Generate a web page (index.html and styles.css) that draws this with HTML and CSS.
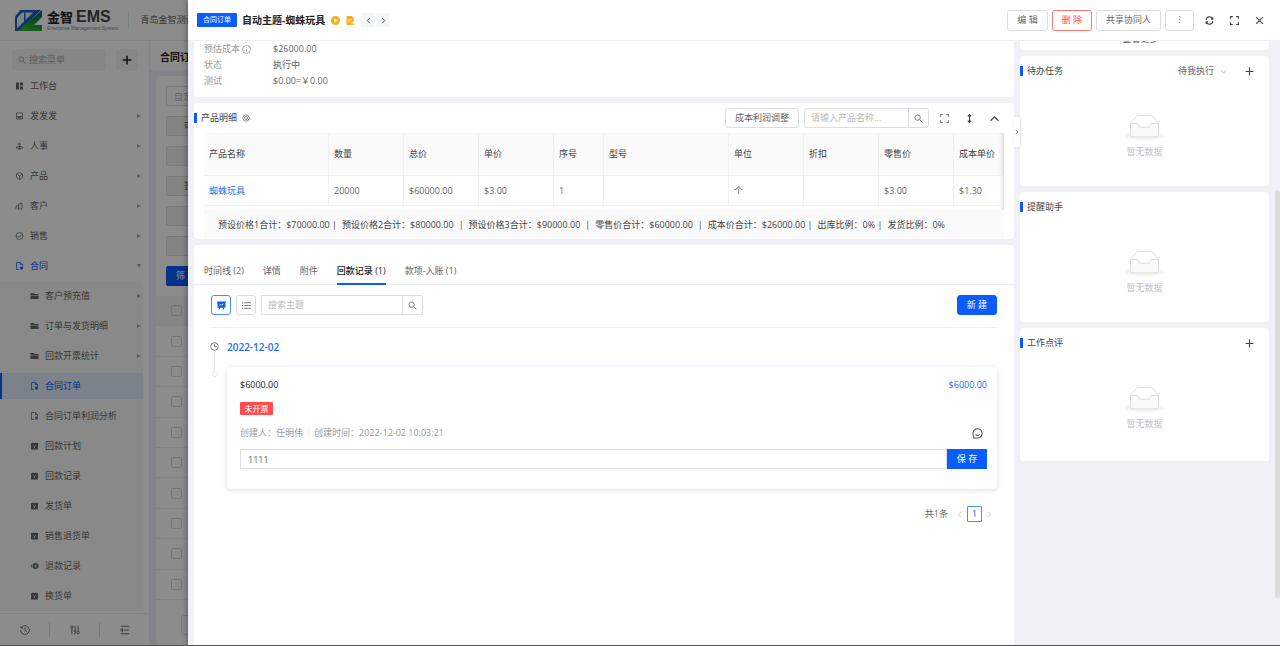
FILE: index.html
```html
<!DOCTYPE html>
<html lang="zh-CN">
<head>
  <meta charset="UTF-8">
  <meta name="viewport" content="width=device-width, initial-scale=1.0">
  <title>合同订单</title>
  <link rel="stylesheet" href="styles.css">
</head>
<body>
  <!-- icon set -->
  <svg class="sprite" aria-hidden="true">
    <linearGradient id="logo-fade" x1="1" y1="0" x2="0.6" y2="1">
      <stop offset="0" stop-color="#1450b8"/><stop offset="0.45" stop-color="#16803c"/><stop offset="1" stop-color="#2cb52c"/>
    </linearGradient>
    <symbol id="i-search" viewBox="0 0 16 16"><circle cx="6.5" cy="6.5" r="4.8"/><path d="M10.2 10.2L15 15"/></symbol>
    <symbol id="i-plus" viewBox="0 0 16 16"><path d="M8 1v14M1 8h14"/></symbol>
    <symbol id="i-close" viewBox="0 0 16 16"><path d="M2 2l12 12M14 2L2 14"/></symbol>
    <symbol id="i-left" viewBox="0 0 16 16"><path d="M11 2L5 8l6 6"/></symbol>
    <symbol id="i-right" viewBox="0 0 16 16"><path d="M5 2l6 6-6 6"/></symbol>
    <symbol id="i-up" viewBox="0 0 16 16"><path d="M1 12l7-7 7 7"/></symbol>
    <symbol id="i-down" viewBox="0 0 16 16"><path d="M2 4l6 8 6-8"/></symbol>
    <symbol id="i-full" viewBox="0 0 16 16"><path d="M1 5V1h4M11 1h4v4M15 11v4h-4M5 15H1v-4"/></symbol>
    <symbol id="i-reload" viewBox="0 0 16 16"><path d="M2 7a6 6 0 0 1 11.500-2M14 9a6 6 0 0 1-11.500 2M14 2v3.500h-3.500M2 14v-3.500h3.500"/></symbol>
    <symbol id="i-updown" viewBox="0 0 16 16"><path d="M8 1v14M5 4l3-3 3 3M5 12l3 3 3-3"/></symbol>
    <symbol id="i-info" viewBox="0 0 16 16"><circle cx="8" cy="8" r="7"/><path d="M8 7v5M8 4v1.500"/></symbol>
    <symbol id="i-gear" viewBox="0 0 16 16"><path d="M5 2h6l4 6-4 6H5L1 8z"/><circle cx="8" cy="8" r="3"/></symbol>
    <symbol id="i-list" viewBox="0 0 16 16"><path d="M4 3h12M4 8h12M4 13h12M0 3h2M0 8h2M0 13h2"/></symbol>
    <symbol id="i-clock" viewBox="0 0 16 16"><circle cx="8" cy="8" r="6.800"/><path d="M8 4v4.500h4"/></symbol>
    <symbol id="i-history" viewBox="0 0 16 16"><path d="M2 4.500A7 7 0 1 1 1 8M1 2l1 3h3M8 4v4.500l3 2"/></symbol>
    <symbol id="i-tune" viewBox="0 0 16 16"><path d="M3 6v9M8 1v6M8 10v5M13 1v8"/><circle cx="3" cy="3.500" r="2"/><circle cx="8" cy="9" r="1.500"/><circle cx="13" cy="12" r="2"/></symbol>
    <symbol id="i-fold" viewBox="0 0 16 16"><path d="M1 2h14M6 8h9M1 14h14M4 5.500L1 8l3 2.500z"/></symbol>
    <symbol id="i-smile" viewBox="0 0 16 16"><path d="M2 14.500l.5-3A6.700 6.700 0 1 1 8 14.500zM5 9.500c1.500 2 4.500 2 6 0"/></symbol>
    <symbol id="i-board" viewBox="0 0 16 16"><path class="solid" d="M0 1h16v2h-1v9h-3l1 3h-2l-1-3H6l-1 3H3l1-3H1V3H0z"/><path class="cut" d="M4.500 8L7 6l1.500 1.500L11.500 5"/></symbol>
    <symbol id="i-dash" viewBox="0 0 16 16"><path class="solid" d="M1 1h6v14H1zM9 1h6v6H9zM9 9h6v6H9z"/></symbol>
    <symbol id="i-inbox" viewBox="0 0 16 16"><path d="M2 2h12v12H2zM2 9h12M5 14v-3h6v3"/></symbol>
    <symbol id="i-org" viewBox="0 0 16 16"><circle cx="8" cy="4" r="2"/><path d="M8 6v8M1 12c1-3 4-3 7-3s6 0 7 3H1zM5 14h6"/></symbol>
    <symbol id="i-box" viewBox="0 0 16 16"><path d="M8 1l6 3v7l-6 4-6-4V4zM2 4l6 4 6-4M8 8v7"/></symbol>
    <symbol id="i-building" viewBox="0 0 16 16"><path d="M1 14V8h5v6M6 14V4l7-2v12zM9 7h1M9 10h1"/></symbol>
    <symbol id="i-badge" viewBox="0 0 16 16"><circle cx="8" cy="8" r="7"/><path d="M4 8l3 2 5-4"/></symbol>
    <symbol id="i-doc" viewBox="0 0 16 16"><path d="M7 15H2V1h8l4 4v4M10 1v4h4"/><circle class="solid" cx="12" cy="12" r="3"/></symbol>
    <symbol id="i-folder" viewBox="0 0 16 16"><path class="solid" d="M0 2h6l2 2h8v2H0zM0 7h16v7H0z"/></symbol>
    <symbol id="i-pack" viewBox="0 0 16 16"><path class="solid" d="M1 2h3V1h2v1h4V1h2v1h3v13H1z"/><path class="cut" d="M5.500 7L8 9l2.500-2M8 9v3"/></symbol>
    <symbol id="i-refund" viewBox="0 0 16 16"><circle class="solid" cx="10" cy="8" r="6"/><path d="M2 5v6"/><path class="cut" d="M9 6h2v4H9z"/></symbol>
    <symbol id="i-empty" viewBox="0 0 64 41">
      <ellipse cx="32" cy="34" rx="32" ry="7" fill="#f5f5f5" stroke="none"/>
      <path d="M55 13.760L44.854 2.258C44.367 1.474 43.656 1 42.907 1H21.093c-.749 0-1.460.474-1.947 1.257L9 13.761V23h46z" fill="#fff"/>
      <path d="M41.613 16.931c0-1.605.994-2.930 2.227-2.931H55v18.137C55 34.260 53.680 36 52.050 36h-40.100C10.320 36 9 34.259 9 32.137V14h11.160c1.233 0 2.227 1.323 2.227 2.928 0 1.605 1.005 2.923 2.237 2.923h14.752c1.232 0 2.237-1.315 2.237-2.920z" fill="#fafafa"/>
    </symbol>
  </svg>

  <div class="app">
    <header class="topbar">
      <svg class="logo" viewBox="0 0 54 42">
        <path d="M0 13L11 0h41L8 42H0z" fill="#1d5fc4"/>
        <path d="M4 16L14 5h22L4 37z" fill="#e4f1fb"/>
        <path d="M18 5h3v18l-3 3z" fill="#1d5fc4"/>
        <path d="M54 0v14L38 30h16v12H6z" fill="url(#logo-fade)"/>
      </svg>
      <div class="brand">
        <div class="brand-name">金智 <span>EMS</span></div>
        <div class="brand-sub">Enterprise Management System</div>
      </div>
      <div class="company">青岛金智测试</div>
    </header>

    <div class="app-body">
      <aside class="sidebar">
        <div class="side-search">
          <label class="search-box"><svg class="icon"><use href="#i-search"/></svg><input type="text" placeholder="搜索菜单" aria-label="搜索菜单"></label>
          <button class="side-add" aria-label="新增"><svg class="icon"><use href="#i-plus"/></svg></button>
        </div>
        <nav class="menu">
          <a class="item" href="#"><svg class="icon"><use href="#i-dash"/></svg>工作台</a>
          <a class="item more" href="#"><svg class="icon"><use href="#i-inbox"/></svg>发发发</a>
          <a class="item more" href="#"><svg class="icon"><use href="#i-org"/></svg>人事</a>
          <a class="item more" href="#"><svg class="icon"><use href="#i-box"/></svg>产品</a>
          <a class="item more" href="#"><svg class="icon"><use href="#i-building"/></svg>客户</a>
          <a class="item more" href="#"><svg class="icon"><use href="#i-badge"/></svg>销售</a>
          <a class="item more open" href="#"><svg class="icon"><use href="#i-doc"/></svg>合同</a>
          <div class="submenu">
            <a class="item more" href="#"><svg class="icon"><use href="#i-folder"/></svg>客户预充值</a>
            <a class="item more" href="#"><svg class="icon"><use href="#i-folder"/></svg>订单与发货明细</a>
            <a class="item more" href="#"><svg class="icon"><use href="#i-folder"/></svg>回款开票统计</a>
            <a class="item selected" href="#"><svg class="icon"><use href="#i-doc"/></svg>合同订单</a>
            <a class="item" href="#"><svg class="icon"><use href="#i-doc"/></svg>合同订单利润分析</a>
            <a class="item" href="#"><svg class="icon"><use href="#i-pack"/></svg>回款计划</a>
            <a class="item" href="#"><svg class="icon"><use href="#i-pack"/></svg>回款记录</a>
            <a class="item" href="#"><svg class="icon"><use href="#i-pack"/></svg>发货单</a>
            <a class="item" href="#"><svg class="icon"><use href="#i-pack"/></svg>销售退货单</a>
            <a class="item" href="#"><svg class="icon"><use href="#i-refund"/></svg>退款记录</a>
            <a class="item" href="#"><svg class="icon"><use href="#i-pack"/></svg>换货单</a>
          </div>
        </nav>
        <div class="side-foot">
          <button aria-label="历史"><svg class="icon"><use href="#i-history"/></svg></button>
          <button aria-label="设置"><svg class="icon"><use href="#i-tune"/></svg></button>
          <button aria-label="收起"><svg class="icon"><use href="#i-fold"/></svg></button>
        </div>
      </aside>

      <main class="page">
        <h1 class="page-title">合同订单</h1>
        <div class="page-card">
          <div class="filters">
            <input type="text" placeholder="自定义" aria-label="自定义">
            <button>审批状态</button>
            <button></button>
            <button>签约日期</button>
            <button></button>
            <button></button>
            <button class="go">筛 选</button>
          </div>
          <div class="rows">
            <div class="row head"><input type="checkbox" aria-label="全选"></div>
            <div class="row"><input type="checkbox" aria-label="选择"></div>
            <div class="row"><input type="checkbox" aria-label="选择"></div>
            <div class="row"><input type="checkbox" aria-label="选择"></div>
            <div class="row"><input type="checkbox" aria-label="选择"></div>
            <div class="row"><input type="checkbox" aria-label="选择"></div>
            <div class="row"><input type="checkbox" aria-label="选择"></div>
            <div class="row"><input type="checkbox" aria-label="选择"></div>
            <div class="row"><input type="checkbox" aria-label="选择"></div>
            <div class="row"><input type="checkbox" aria-label="选择"></div>
          </div>
          <button class="page-more" aria-label="更多"></button>
        </div>
      </main>
    </div>
  </div>

  <div class="mask"></div>

  <section class="drawer">
    <header class="drawer-head">
      <span class="type-tag">合同订单</span>
      <h2>自动主题-蜘蛛玩具</h2>
      <svg class="state-icon" viewBox="0 0 16 16"><circle cx="8" cy="8" r="8" fill="#faad14"/><path d="M6 4l6 4-6 4z" fill="#fff"/></svg>
      <svg class="state-icon doc" viewBox="0 0 16 16"><path d="M1 0h9l4 4v12H1z" fill="#faad14"/><path d="M4 6h6M4 9h4M9 12h6M12 10l3 2-3 2" stroke="#fff" stroke-width="1.500" fill="none"/></svg>
      <div class="pager">
        <button aria-label="上一条"><svg class="icon"><use href="#i-left"/></svg></button>
        <button aria-label="下一条"><svg class="icon"><use href="#i-right"/></svg></button>
      </div>
      <div class="head-actions">
        <button class="btn">编 辑</button>
        <button class="btn danger">删 除</button>
        <button class="btn">共享协同人</button>
        <button class="btn" aria-label="更多">⋮</button>
        <button class="tool" aria-label="刷新"><svg class="icon"><use href="#i-reload"/></svg></button>
        <button class="tool" aria-label="全屏"><svg class="icon"><use href="#i-full"/></svg></button>
        <button class="tool" aria-label="关闭"><svg class="icon"><use href="#i-close"/></svg></button>
      </div>
    </header>

    <div class="drawer-body">
      <div class="main-col">
        <dl class="card info">
          <dt>预估成本 <svg class="icon"><use href="#i-info"/></svg></dt><dd>$26000.00</dd>
          <dt>状态</dt><dd>执行中</dd>
          <dt>测试</dt><dd>$0.00=￥0.00</dd>
        </dl>

        <section class="card products">
          <div class="section-head">
            <h3>产品明细</h3>
            <svg class="icon"><use href="#i-gear"/></svg>
            <div class="section-tools">
              <button class="btn small">成本利润调整</button>
              <div class="search"><input type="text" placeholder="请输入产品名称..." aria-label="产品名称"><button aria-label="搜索"><svg class="icon"><use href="#i-search"/></svg></button></div>
              <button class="tool light" aria-label="全屏"><svg class="icon"><use href="#i-full"/></svg></button>
              <button class="tool" aria-label="行高"><svg class="icon"><use href="#i-updown"/></svg></button>
              <button class="tool" aria-label="收起"><svg class="icon"><use href="#i-up"/></svg></button>
            </div>
          </div>
          <div class="table-wrap">
            <table>
              <colgroup><col class="wide"><col><col><col><col class="slim"><col class="wide"><col><col><col><col class="slim"></colgroup>
              <thead>
                <tr><th>产品名称</th><th>数量</th><th>总价</th><th>单价</th><th>序号</th><th>型号</th><th>单位</th><th>折扣</th><th>零售价</th><th>成本单价</th></tr>
              </thead>
              <tbody>
                <tr><td><a href="#">蜘蛛玩具</a></td><td>20000</td><td>$60000.00</td><td>$3.00</td><td>1</td><td></td><td>个</td><td></td><td>$3.00</td><td>$1.30</td></tr>
              </tbody>
            </table>
          </div>
          <div class="totals">
            <span>预设价格1合计：$70000.00 |</span>
            <span>预设价格2合计：$80000.00</span><i>|</i>
            <span>预设价格3合计：$90000.00</span><i>|</i>
            <span>零售价合计：$60000.00</span><i>|</i>
            <span>成本价合计：$26000.00 |</span>
            <span>出库比例：0% |</span>
            <span>发货比例：0%</span>
          </div>
        </section>

        <section class="card records">
          <nav class="tabs">
            <a href="#">时间线 (2)</a>
            <a href="#">详情</a>
            <a href="#">附件</a>
            <a class="active" href="#">回款记录 (1)</a>
            <a href="#">款项-入账 (1)</a>
          </nav>
          <div class="record-body">
            <div class="record-tools">
              <button class="square on" aria-label="卡片"><svg class="icon"><use href="#i-board"/></svg></button>
              <button class="square" aria-label="列表"><svg class="icon"><use href="#i-list"/></svg></button>
              <div class="search subject"><input type="text" placeholder="搜索主题" aria-label="搜索主题"><button aria-label="搜索"><svg class="icon"><use href="#i-search"/></svg></button></div>
              <button class="btn primary">新 建</button>
            </div>
            <div class="timeline">
              <div class="rail"><svg class="icon"><use href="#i-clock"/></svg><span class="line"></span><span class="ring"></span></div>
              <div class="day">
                <h4>2022-12-02</h4>
                <article class="record">
                  <div class="record-top"><strong>$6000.00</strong><a href="#">$6000.00</a></div>
                  <span class="tag">未开票</span>
                  <div class="meta"><span>创建人：任明伟</span><span>创建时间：2022-12-02 10:03:21</span><svg class="icon"><use href="#i-smile"/></svg></div>
                  <div class="comment"><input type="text" value="1111" aria-label="评论"><button>保 存</button></div>
                </article>
              </div>
            </div>
            <div class="pagination">
              <span>共1条</span>
              <button aria-label="上一页"><svg class="icon"><use href="#i-left"/></svg></button>
              <button class="current">1</button>
              <button aria-label="下一页"><svg class="icon"><use href="#i-right"/></svg></button>
            </div>
          </div>
        </section>
      </div>

      <aside class="side-col">
        <div class="card peek"><a href="#">查看更多 <svg class="icon"><use href="#i-down"/></svg></a></div>
        <section class="card widget">
          <div class="section-head">
            <h3>待办任务</h3>
            <div class="section-tools">
              <label class="picker"><select aria-label="待办筛选"><option>待我执行</option></select><svg class="icon"><use href="#i-down"/></svg></label>
              <button class="tool" aria-label="新增"><svg class="icon"><use href="#i-plus"/></svg></button>
            </div>
          </div>
          <div class="empty"><svg><use href="#i-empty"/></svg>暂无数据</div>
        </section>
        <section class="card widget">
          <div class="section-head"><h3>提醒助手</h3></div>
          <div class="empty"><svg><use href="#i-empty"/></svg>暂无数据</div>
        </section>
        <section class="card widget">
          <div class="section-head">
            <h3>工作点评</h3>
            <div class="section-tools"><button class="tool" aria-label="新增"><svg class="icon"><use href="#i-plus"/></svg></button></div>
          </div>
          <div class="empty"><svg><use href="#i-empty"/></svg>暂无数据</div>
        </section>
        <button class="collapse" aria-label="收起侧栏"><svg class="icon"><use href="#i-right"/></svg></button>
      </aside>
      <span class="scroll-thumb"></span>
    </div>
  </section>
</body>
</html>
```

FILE: styles.css
```css
* {
  box-sizing: border-box;
}
body {
  margin: 0;
  height: 100vh;
  overflow: hidden;
  position: relative;
  border-bottom: 1px solid #555;
  font: 9px/16px "Open Sans", "Noto Sans CJK SC", sans-serif;
  color: #666;
}
h1, h2, h3, h4, dl, dd {
  margin: 0;
  font-size: 9px;
  font-weight: normal;
}
a {
  color: inherit;
  text-decoration: none;
}
button, input, select {
  font: inherit;
  color: inherit;
  margin: 0;
  padding: 0;
  border: 0;
  background: none;
}
input::placeholder {
  color: #bbb;
}
.sprite {
  position: absolute;
  width: 0;
  height: 0;
}
.icon {
  width: 10px;
  height: 10px;
  flex: none;
  fill: none;
  stroke: currentColor;
  stroke-width: 1.5;
}
.solid {
  fill: currentColor;
  stroke: none;
}
.cut {
  stroke: #fff;
}

/* page behind the drawer */
.app {
  height: 100%;
  display: flex;
  flex-direction: column;
}
.topbar {
  height: 41px;
  flex: none;
  display: flex;
  align-items: center;
  padding-left: 15px;
  border-bottom: 1px solid #eee;
  background: #fff;
}
.logo {
  width: 27px;
  height: 21px;
}
.brand {
  margin: 0 10px 0 5px;
}
.brand-name {
  font: bold 13px/16px "Noto Sans CJK SC", sans-serif;
  color: #222;
}
.brand-name span {
  font: bold 16px/16px "Liberation Sans", sans-serif;
  color: #444;
}
.brand-sub {
  font: 5px/6px "Liberation Sans", sans-serif;
  color: #888;
}
.company {
  padding-left: 11px;
  border-left: 1px solid #e5e5e5;
  white-space: nowrap;
}
.app-body {
  flex: 1;
  min-height: 0;
  display: flex;
}
.sidebar {
  width: 150px;
  flex: none;
  display: flex;
  flex-direction: column;
  border-right: 1px solid #eee;
  background: #fff;
}
.side-search {
  display: flex;
  justify-content: space-between;
  padding: 8px 11px 0 12px;
}
.search-box {
  width: 94px;
  height: 22px;
  display: flex;
  align-items: center;
  gap: 3px;
  padding-left: 6px;
  border-radius: 3px;
  background: #f4f4f4;
  color: #888;
}
.search-box input {
  width: 70px;
}
.search-box input::placeholder {
  color: #aaa;
}
.search-box .icon {
  width: 8px;
  height: 8px;
}
.side-add {
  width: 22px;
  height: 22px;
  display: grid;
  place-items: center;
  border-radius: 3px;
  background: #f4f4f4;
  color: #222;
}
.side-add .icon {
  stroke-width: 2.5;
}
.menu {
  flex: 1;
  min-height: 0;
  overflow: hidden;
}
.menu, .submenu {
  display: flex;
  flex-direction: column;
}
.item {
  height: 26px;
  flex: none;
  margin: 2px 6px 2px 0;
  display: flex;
  align-items: center;
  gap: 6px;
  padding: 0 2px 0 15px;
}
.item .icon {
  width: 9px;
  height: 8px;
}
.item.more::after {
  content: "";
  margin-left: auto;
  border: 2px solid transparent;
  border-left: 4px solid #aaa;
  border-right: 0;
}
.item.more.open::after {
  border: 2px solid transparent;
  border-top: 4px solid #aaa;
  border-bottom: 0;
}
.item.open, .item.selected {
  color: #0a5cff;
}
.submenu {
  margin-right: 6px;
  background: #fafafa;
}
.submenu .item {
  margin-right: 0;
  padding-left: 30px;
}
.submenu .selected {
  padding-left: 28px;
  border-left: 2px solid #0a5cff;
  background: #e0edff;
}
.side-foot {
  height: 32px;
  flex: none;
  display: flex;
  align-items: center;
  border-top: 1px solid #eee;
}
.side-foot button {
  flex: 1;
  height: 15px;
  display: grid;
  place-items: center;
}
.side-foot button + button {
  border-left: 1px solid #ddd;
}
.page {
  flex: 1;
  display: flex;
  flex-direction: column;
  background: #eff1f6;
}
.page-title {
  height: 29px;
  flex: none;
  padding-left: 10px;
  font: bold 10px/31px "Noto Sans CJK SC", sans-serif;
  color: #222;
  background: #fff;
}
.page-card {
  flex: 1;
  margin: 6px 0 0 6px;
  border-radius: 4px;
  background: #fff;
}
.filters {
  display: flex;
  flex-direction: column;
  align-items: flex-start;
  gap: 10px;
  padding: 10px;
}
.filters input, .filters button {
  width: 60px;
  height: 20px;
  padding-left: 17px;
  border: 1px solid #ddd;
  border-radius: 2px;
  background: #f0f0f0;
  text-align: left;
  white-space: nowrap;
  overflow: hidden;
}
.filters input {
  padding-left: 7px;
  background: #fff;
}
.filters .go {
  padding-left: 9px;
  border-color: #0a5cff;
  background: #0a5cff;
  color: #fff;
}
.rows {
  height: 304px;
  display: flex;
  flex-direction: column;
}
.row {
  flex: 1;
  display: flex;
  align-items: center;
  padding-left: 15px;
  border-bottom: 1px solid #eee;
}
.row.head {
  background: #f5f5f5;
}
.row input {
  appearance: none;
  width: 11px;
  height: 11px;
  border: 1px solid #d5d5d5;
  border-radius: 2px;
}
.page-more {
  width: 40px;
  height: 20px;
  margin: 15px 0 0 25px;
  border: 1px solid #ddd;
  border-radius: 3px;
}
.mask {
  position: absolute;
  inset: 0;
  background: rgba(0,0,0,0.45);
}

/* drawer */
.drawer {
  position: absolute;
  inset: 0 0 0 188px;
  display: flex;
  flex-direction: column;
  background: #eff1f6;
  box-shadow: -2px 0 5px rgba(0,0,0,0.25);
}
.drawer-head {
  height: 41px;
  flex: none;
  display: flex;
  align-items: center;
  padding: 0 11px 0 9px;
  border-bottom: 1px solid #f0f0f0;
  background: #fff;
}
.type-tag {
  width: 40px;
  border-radius: 1px;
  background: #0a5cff;
  color: #fff;
  font-size: 7px;
  line-height: 14px;
  text-align: center;
}
.drawer-head h2 {
  margin: 0 6px 0 5px;
  font-size: 10px;
  font-weight: bold;
  color: #222;
}
.state-icon {
  width: 9px;
  height: 9px;
  margin-right: 6px;
}
.pager {
  display: flex;
  gap: 1px;
}
.pager button {
  width: 14px;
  height: 14px;
  display: grid;
  place-items: center;
  background: #f5f6f7;
  color: #333;
}
.pager .icon {
  width: 7px;
  height: 7px;
  stroke-width: 2;
}
.head-actions {
  margin-left: auto;
  display: flex;
  align-items: center;
  gap: 4px;
}
.btn {
  height: 21px;
  min-width: 29px;
  padding: 0 9px;
  border: 1px solid #ddd;
  border-radius: 3px;
  background: #fff;
  white-space: nowrap;
}
.btn.danger {
  border-color: #ff7875;
  color: #ff4d4f;
}
.btn.small {
  height: 20px;
}
.btn.primary {
  height: 20px;
  margin-left: auto;
  border-color: #0a5cff;
  background: #0a5cff;
  color: #fff;
}
.tool {
  width: 20px;
  height: 20px;
  display: grid;
  place-items: center;
  color: #444;
}
.tool.light {
  color: #888;
}
.head-actions .tool {
  margin-left: 1px;
}
.tool .icon {
  width: 9px;
  height: 9px;
  stroke-width: 2;
}
.drawer-body {
  flex: 1;
  min-height: 0;
  position: relative;
  display: flex;
  gap: 6px;
  padding: 0 11px 0 6px;
}
.main-col {
  flex: 1;
  min-width: 0;
  display: flex;
  flex-direction: column;
  gap: 6px;
}
.card {
  border-radius: 3px;
  background: #fff;
}
.info {
  display: grid;
  grid-template-columns: 69px 1fr;
  padding: 0 10px 8px;
  border-radius: 0 0 3px 3px;
}
.info dt {
  display: flex;
  align-items: center;
  gap: 2px;
  color: #999;
}
.info .icon {
  width: 9px;
  height: 9px;
}
.section-head {
  height: 30px;
  display: flex;
  align-items: center;
}
.section-head h3 {
  padding-left: 4px;
  border-left: 3px solid #0a5cff;
  line-height: 10px;
  color: #444;
}
.section-head > .icon {
  width: 8px;
  height: 8px;
  margin-left: 5px;
}
.section-tools {
  margin-left: auto;
  display: flex;
  align-items: center;
  gap: 5px;
  padding-right: 10px;
}
.search {
  width: 125px;
  height: 20px;
  display: flex;
  border: 1px solid #ddd;
  border-radius: 3px;
}
.search input {
  flex: 1;
  min-width: 0;
  padding-left: 6px;
}
.search button {
  width: 20px;
  display: grid;
  place-items: center;
  border-left: 1px solid #ddd;
}
.search .icon {
  width: 9px;
  height: 9px;
}
.table-wrap {
  margin: 0 10px;
  box-shadow: inset -5px 0 4px -3px rgba(0,0,0,0.12);
  padding-bottom: 4px;
}
table {
  width: 100%;
  table-layout: fixed;
  border-spacing: 0;
}
col {
  width: 75px;
}
.wide {
  width: 125px;
}
.slim {
  width: 50px;
}
th, td {
  padding: 0 0 0 5px;
  text-align: left;
  font-weight: normal;
  white-space: nowrap;
  border: solid #f0f0f0;
  border-width: 0 1px 1px 0;
}
th:last-child, td:last-child {
  border-right: 0;
}
th {
  height: 43px;
  background: rgba(0,0,0,0.02);
  color: #444;
}
td {
  height: 30px;
}
td a, .record-top a {
  color: #1a6dff;
}
.totals {
  height: 29px;
  margin: 0 10px;
  padding-left: 14px;
  display: flex;
  align-items: center;
  gap: 5px;
  background: #fafafa;
  white-space: nowrap;
  color: #444;
}
.totals i {
  font-style: normal;
}
.records {
  flex: 1;
  border-radius: 3px 3px 0 0;
}
.tabs {
  height: 40px;
  display: flex;
  gap: 19px;
  padding: 11px 10px 0;
  border-bottom: 1px solid #f0f0f0;
  line-height: 29px;
}
.tabs .active {
  height: 29px;
  border-bottom: 2px solid #0a5cff;
  color: #222;
  font-weight: 500;
}
.record-body {
  padding: 10px 17px 0;
}
.record-tools {
  display: flex;
  gap: 5px;
  padding-bottom: 12px;
  border-bottom: 1px solid #f0f0f0;
}
.square {
  width: 20px;
  height: 20px;
  display: grid;
  place-items: center;
  border: 1px solid #ddd;
  border-radius: 3px;
}
.square .icon {
  width: 9px;
  height: 9px;
}
.square.on {
  border-color: #4d8bff;
  color: #0a5cff;
}
.search.subject {
  width: 162px;
  border-radius: 1px;
}
.timeline {
  display: flex;
  gap: 12px;
  padding-top: 11px;
}
.rail {
  width: 7px;
  flex: none;
  display: flex;
  flex-direction: column;
  align-items: center;
  padding-top: 3px;
}
.rail .icon {
  width: 9px;
  height: 9px;
}
.rail .line {
  width: 1px;
  height: 19px;
  margin-top: 1px;
  background: #e8e8e8;
}
.rail .ring {
  width: 6px;
  height: 6px;
  border: 1px solid #e5e5e5;
  border-radius: 50%;
}
.day {
  flex: 1;
  margin-left: -3px;
}
.day h4 {
  font-size: 10px;
  font-weight: 600;
  color: #1a6dff;
}
.record {
  margin-top: 12px;
  padding: 10px 10px 20px 13px;
  border-radius: 4px;
  box-shadow: 0 1px 5px rgba(10,60,160,0.18);
}
.record-top {
  display: flex;
  justify-content: space-between;
}
.record-top strong {
  font-weight: 500;
  color: #222;
}
.tag {
  display: block;
  width: 33px;
  margin: 9px 0 10px;
  border-radius: 1px;
  background: #ff4d4f;
  color: #fff;
  font-size: 8px;
  line-height: 13px;
  text-align: center;
}
.meta {
  display: flex;
  align-items: center;
  color: #999;
}
.meta span + span {
  margin-left: 5px;
  padding-left: 5px;
  border-left: 1px solid #eee;
  line-height: 8px;
}
.meta .icon {
  width: 11px;
  height: 11px;
  margin: 0 4px 0 auto;
  color: #555;
}
.comment {
  display: flex;
  margin-top: 8px;
}
.comment input {
  flex: 1;
  height: 20px;
  padding-left: 7px;
  border: 1px solid #ddd;
}
.comment button {
  width: 40px;
  height: 20px;
  background: #0a5cff;
  color: #fff;
}
.pagination {
  display: flex;
  align-items: center;
  justify-content: flex-end;
  margin-top: 17px;
}
.pagination button {
  width: 15px;
  height: 16px;
  display: grid;
  place-items: center;
  color: #aaa;
}
.pagination span {
  margin-right: 4px;
}
.pagination .icon {
  width: 7px;
  height: 7px;
}
.pagination .current {
  border: 1px solid #4d8bff;
  border-radius: 1px;
  color: #0a5cff;
  line-height: 14px;
}

/* right column */
.side-col {
  width: 249px;
  flex: none;
  position: relative;
  display: flex;
  flex-direction: column;
  gap: 6px;
}
.peek {
  height: 9px;
  display: flex;
  align-items: flex-end;
  justify-content: center;
  padding-bottom: 3px;
  border-radius: 0 0 3px 3px;
  overflow: hidden;
}
.peek .icon {
  width: 6px;
  height: 6px;
}
.widget {
  height: 130px;
}
.widget:last-of-type {
  height: 133px;
}
.picker {
  display: flex;
  align-items: center;
  gap: 5px;
}
.picker select {
  appearance: none;
}
.picker .icon {
  width: 7px;
  height: 7px;
  color: #aaa;
}
.picker + .tool {
  margin-left: 7px;
}
.empty {
  display: flex;
  flex-direction: column;
  align-items: center;
  gap: 4px;
  padding-top: 29px;
  color: #bfbfbf;
}
.empty svg {
  width: 39px;
  height: 25px;
  stroke: #d9d9d9;
  stroke-width: 1.5;
}
.collapse {
  position: absolute;
  top: 76px;
  left: -6px;
  width: 6px;
  height: 30px;
  display: grid;
  place-items: center;
  border-radius: 0 2px 2px 0;
  background: #fff;
  box-shadow: 1px 0 3px rgba(0,0,0,0.12);
}
.collapse .icon {
  width: 6px;
  height: 6px;
  stroke-width: 2;
}
.scroll-thumb {
  position: absolute;
  top: 149px;
  right: 0;
  width: 5px;
  height: 408px;
  border-radius: 3px;
  background: #dcdcdc;
}
```
